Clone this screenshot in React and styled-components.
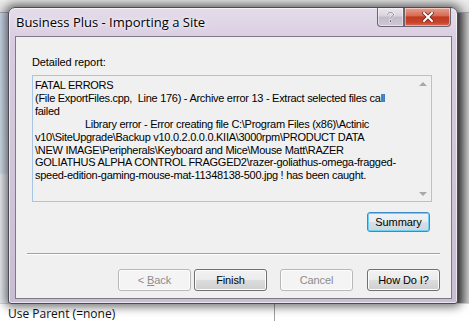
import React from 'react';
import styled, { createGlobalStyle } from 'styled-components';

const GlobalStyle = createGlobalStyle`
   html, body {
      margin: 0;
      padding: 0;
      background: #ffffff;
      overflow: hidden;
   }
`;

const Desktop = styled.div`
   position: relative;
   width: 469px;
   height: 321px;
   overflow: hidden;
   display: grid;
   grid-template-rows: 13px 1fr 18px;
   font-family: 'Liberation Sans', Arial, sans-serif;
`;

const BackTop = styled.div`
   background: linear-gradient(#ececec, #dedede);
   border-bottom: 1px solid #9ea4ab;
`;

const BackMiddle = styled.div`
   display: grid;
   grid-template-columns: 9px 1fr 12px;
`;

const BackLeft = styled.div`
   background: linear-gradient(#c9d6e6 0%, #d3deeb 55%, #e9edf2 56%, #e9edf2 100%);
   border-right: 1px solid #8c96a3;
`;

const BackRight = styled.div`
   grid-column: 3;
   background: linear-gradient(90deg, #5d5d5d, #8e8e8e 40%, #c9c9c9);
`;

const BackBottom = styled.div`
   display: grid;
   grid-template-columns: 275px 1fr;
   background: #ffffff;
   border-top: 1px solid #d4d4d4;
`;

const BackCell = styled.div`
   font-family: 'Open Sans', 'Liberation Sans', sans-serif;
   font-size: 12px;
   color: #111;
   padding: 1px 0 0 8px;
   border-right: ${p => (p.$divider ? '1px solid #a0a0a0' : 'none')};
`;

const Window = styled.div`
   position: absolute;
   left: 8px;
   top: 7px;
   width: 450px;
   height: 297px;
   box-sizing: border-box;
   border: 1px solid #4d4b55;
   border-radius: 7px 7px 3px 3px;
   background: linear-gradient(180deg, #e4dcea 0%, #d8cce0 12%, #c9bdd3 100%);
   box-shadow: 0 0 10px 3px rgba(0, 0, 0, 0.55), inset 0 0 0 1px rgba(255, 255, 255, 0.6);
   display: flex;
   flex-direction: column;
   padding: 0 5px 4px 6px;
`;

const TitleBar = styled.div`
   height: 28px;
   display: flex;
   align-items: flex-start;
   justify-content: space-between;
`;

const Title = styled.div`
   font-family: 'Open Sans', 'Liberation Sans', sans-serif;
   font-size: 13px;
   color: #000;
   padding: 5px 0 0 1px;
   text-shadow: 0 0 6px rgba(255, 255, 255, 0.9), 0 0 3px rgba(255, 255, 255, 0.9);
`;

const CaptionButtons = styled.div`
   display: flex;
   margin-right: 1px;
`;

const CaptionButton = styled.div`
   height: 19px;
   width: ${p => p.$w}px;
   box-sizing: border-box;
   border: 1px solid #6b6574;
   border-top: none;
   border-radius: ${p => p.$radius};
   display: flex;
   align-items: center;
   justify-content: center;
   background: ${p => p.$close
      ? 'linear-gradient(#e7a08f 0%, #d66c55 42%, #c13a21 50%, #c8442a 80%, #d9705a 100%)'
      : 'linear-gradient(#ebe6ee 0%, #d9d2de 45%, #c2b9c9 50%, #cfc6d6 100%)'};
   box-shadow: inset 0 0 0 1px rgba(255, 255, 255, 0.45);
`;

const Client = styled.div`
   flex: 1;
   background: #f0f0f0;
   border: 1px solid #7d7a86;
   display: flex;
   flex-direction: column;
   padding: 0 11px 0 11px;
`;

const Label = styled.div`
   font-size: 11px;
   letter-spacing: -0.1px;
   color: #000;
   margin: 18px 0 0 5px;
   line-height: 14px;
`;

const ReportBox = styled.div`
   margin: 6px 8px 0 5px;
   height: 127px;
   box-sizing: border-box;
   border: 1px solid #a7c6e6;
   background: #f0f0f0;
   display: flex;
`;

const ReportText = styled.div`
   flex: 1;
   padding: 3px 0 0 2px;
   font-size: 11px;
   letter-spacing: -0.28px;
   line-height: 12.9px;
   color: #000;
   white-space: pre;
   overflow: hidden;
`;

const ScrollBar = styled.div`
   width: 16px;
   display: flex;
   flex-direction: column;
   justify-content: space-between;
   align-items: center;
   padding: 6px 0 5px;
`;

const Arrow = styled.div`
   width: 0;
   height: 0;
   border-left: 4px solid transparent;
   border-right: 4px solid transparent;
   ${p => (p.$down ? 'border-top: 4px solid #a8a8a8;' : 'border-bottom: 4px solid #a8a8a8;')}
`;

const SummaryRow = styled.div`
   display: flex;
   justify-content: flex-end;
   margin: 10px 10px 0 0;
`;

const Button = styled.div`
   width: ${p => p.$w || 73}px;
   height: ${p => p.$h || 22}px;
   box-sizing: border-box;
   border-radius: 3px;
   display: flex;
   align-items: center;
   justify-content: center;
   font-size: 11px;
   letter-spacing: -0.1px;
   white-space: pre;
   color: ${p => (p.$disabled ? '#8c8c8c' : '#000')};
   border: 1px solid ${p => (p.$disabled ? '#b6b8ba' : p.$focus ? '#3c8ac8' : '#707070')};
   background: ${p => p.$disabled
      ? '#f4f4f4'
      : p.$focus
         ? 'linear-gradient(#eef3f6 0%, #e6ecf0 50%, #d6e0e6 51%, #cbd7de 100%)'
         : 'linear-gradient(#f2f2f2 0%, #ebebeb 50%, #dddddd 51%, #cfcfcf 100%)'};
   box-shadow: inset 0 0 0 1px ${p => (p.$disabled ? '#fcfcfc' : p.$focus ? '#6fd0f5' : '#fcfcfc')};
`;

const Separator = styled.div`
   height: 1px;
   background: #a0a0a0;
   border-bottom: 1px solid #ffffff;
   margin: 21px 0 0 0;
`;

const ButtonRow = styled.div`
   display: flex;
   justify-content: flex-end;
   margin-top: 14px;
`;

const ButtonGap = styled.div`
   width: ${p => p.$w}px;
`;

const report = [
   'FATAL ERRORS',
   '(File ExportFiles.cpp,  Line 176) - Archive error 13 - Extract selected files call',
   'failed',
   '                  Library error - Error creating file C:\\Program Files (x86)\\Actinic',
   'v10\\SiteUpgrade\\Backup v10.0.2.0.0.0.KIIA\\3000rpm\\PRODUCT DATA',
   '\\NEW IMAGE\\Peripherals\\Keyboard and Mice\\Mouse Matt\\RAZER',
   'GOLIATHUS ALPHA CONTROL FRAGGED2\\razer-goliathus-omega-fragged-',
   'speed-edition-gaming-mouse-mat-11348138-500.jpg ! has been caught.',
].join('\n');

export default function App() {
   return (
      <>
         <GlobalStyle />
         <Desktop>
            <BackTop />
            <BackMiddle>
               <BackLeft />
               <BackRight />
            </BackMiddle>
            <BackBottom>
               <BackCell $divider>Use Parent (=none)</BackCell>
               <BackCell />
            </BackBottom>

            <Window>
               <TitleBar>
                  <Title>Business Plus - Importing a Site</Title>
                  <CaptionButtons>
                     <CaptionButton $w={27} $radius="0 0 0 4px">
                        <svg width="9" height="12" viewBox="0 0 9 12">
                           <path d="M1.5 3.5 C1.5 1 7.5 1 7.5 3.5 C7.5 5.5 4.5 5.5 4.5 7.5" fill="none" stroke="#fff" strokeWidth="2" />
                           <path d="M1.5 3.5 C1.5 1 7.5 1 7.5 3.5 C7.5 5.5 4.5 5.5 4.5 7.5" fill="none" stroke="#555" strokeWidth="0.8" />
                           <rect x="3.4" y="9" width="2.2" height="2.2" fill="#555" stroke="#fff" strokeWidth="0.6" />
                        </svg>
                     </CaptionButton>
                     <CaptionButton $w={47} $radius="0 0 4px 0" $close>
                        <svg width="12" height="10" viewBox="0 0 12 10">
                           <path d="M2 1 L10 9 M10 1 L2 9" stroke="#5a2a20" strokeWidth="3.6" strokeLinecap="square" />
                           <path d="M2 1 L10 9 M10 1 L2 9" stroke="#fff" strokeWidth="2" strokeLinecap="square" />
                        </svg>
                     </CaptionButton>
                  </CaptionButtons>
               </TitleBar>
               <Client>
                  <Label>Detailed report:</Label>
                  <ReportBox>
                     <ReportText>{report}</ReportText>
                     <ScrollBar>
                        <Arrow />
                        <Arrow $down />
                     </ScrollBar>
                  </ReportBox>
                  <SummaryRow>
                     <Button $w={63} $h={20} $focus>Summary</Button>
                  </SummaryRow>
                  <Separator />
                  <ButtonRow>
                     <Button $disabled>{'< '}<u>B</u>ack</Button>
                     <ButtonGap $w={3} />
                     <Button>Finish</Button>
                     <ButtonGap $w={13} />
                     <Button $disabled>Cancel</Button>
                     <ButtonGap $w={14} />
                     <Button>How Do I?</Button>
                  </ButtonRow>
               </Client>
            </Window>
         </Desktop>
      </>
   );
}
